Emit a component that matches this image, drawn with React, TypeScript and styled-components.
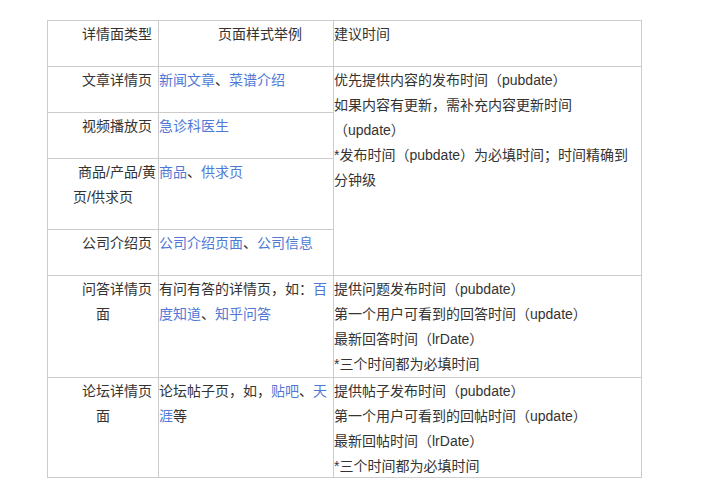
import React from "react";
import styled, { createGlobalStyle } from "styled-components";

const Global = createGlobalStyle`
  html, body { margin: 0; padding: 0; background: #fff; }
  body {
    font-family: "Liberation Sans", "Noto Sans CJK SC", sans-serif;
    font-size: 14px;
    color: #333;
  }
`;

const Page = styled.div`
  padding: 20px 0 0 47px;
`;

const Table = styled.div`
  display: grid;
  width: max-content;
  grid-template-columns: 110px 174px 307px;
  grid-template-rows: 45px 45px 45px 70px 45px 101px 99px;
  gap: 1px;
  padding: 1px;
  background: #cccccc;
`;

const Cell = styled.div<{ $align?: "left" | "center"; $indent?: boolean; $span?: number; $wide?: boolean }>`
  background: #fff;
  padding: 1px ${(p) => (p.$wide ? "6px" : "0")} 0 0;
  line-height: 25px;
  text-align: ${(p) => p.$align ?? "left"};
  text-indent: ${(p) => (p.$indent ? "2em" : "0")};
  ${(p) => (p.$span ? `grid-row: span ${p.$span};` : "")}
`;

const TypeCell = styled(Cell).attrs({ $align: "center", $indent: true })``;

const Link = styled.span`
  color: #5079d6;
`;

const Line = styled.div``;

export default function App() {
  return (
    <>
      <Global />
      <Page>
        <Table>
          <TypeCell>详情面类型</TypeCell>
          <Cell $align="center" $indent>页面样式举例</Cell>
          <Cell $wide>建议时间</Cell>

          <TypeCell>文章详情页</TypeCell>
          <Cell>
            <Link>新闻文章</Link>、<Link>菜谱介绍</Link>
          </Cell>
          <Cell $span={4} $wide>
            <Line>优先提供内容的发布时间（pubdate）</Line>
            <Line>如果内容有更新，需补充内容更新时间（update）</Line>
            <Line>*发布时间（pubdate）为必填时间；时间精确到分钟级</Line>
          </Cell>

          <TypeCell>视频播放页</TypeCell>
          <Cell>
            <Link>急诊科医生</Link>
          </Cell>

          <TypeCell>商品/产品/黄页/供求页</TypeCell>
          <Cell>
            <Link>商品</Link>、<Link>供求页</Link>
          </Cell>

          <TypeCell>公司介绍页</TypeCell>
          <Cell>
            <Link>公司介绍页面</Link>、<Link>公司信息</Link>
          </Cell>

          <TypeCell>问答详情页面</TypeCell>
          <Cell>
            有问有答的详情页，如：<Link>百度知道</Link>、<Link>知乎问答</Link>
          </Cell>
          <Cell $wide>
            <Line>提供问题发布时间（pubdate）</Line>
            <Line>第一个用户可看到的回答时间（update）</Line>
            <Line>最新回答时间（lrDate）</Line>
            <Line>*三个时间都为必填时间</Line>
          </Cell>

          <TypeCell>论坛详情页面</TypeCell>
          <Cell>
            论坛帖子页，如，<Link>贴吧</Link>、<Link>天涯</Link>等
          </Cell>
          <Cell $wide>
            <Line>提供帖子发布时间（pubdate）</Line>
            <Line>第一个用户可看到的回帖时间（update）</Line>
            <Line>最新回帖时间（lrDate）</Line>
            <Line>*三个时间都为必填时间</Line>
          </Cell>
        </Table>
      </Page>
    </>
  );
}
